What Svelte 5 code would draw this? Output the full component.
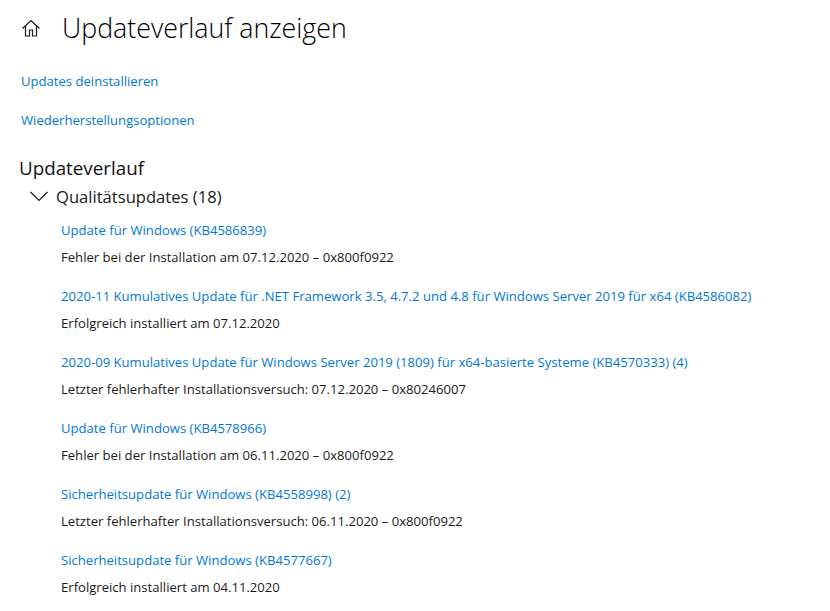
<script lang="ts">
	const updates = [
		{ title: 'Update für Windows (KB4586839)', status: 'Fehler bei der Installation am 07.12.2020 – 0x800f0922' },
		{ title: '2020-11 Kumulatives Update für .NET Framework 3.5, 4.7.2 und 4.8 für Windows Server 2019 für x64 (KB4586082)', status: 'Erfolgreich installiert am 07.12.2020' },
		{ title: '2020-09 Kumulatives Update für Windows Server 2019 (1809) für x64-basierte Systeme (KB4570333) (4)', status: 'Letzter fehlerhafter Installationsversuch: 07.12.2020 – 0x80246007' },
		{ title: 'Update für Windows (KB4578966)', status: 'Fehler bei der Installation am 06.11.2020 – 0x800f0922' },
		{ title: 'Sicherheitsupdate für Windows (KB4558998) (2)', status: 'Letzter fehlerhafter Installationsversuch: 06.11.2020 – 0x800f0922' },
		{ title: 'Sicherheitsupdate für Windows (KB4577667)', status: 'Erfolgreich installiert am 04.11.2020' }
	];
</script>

<div class="page">
	<header class="head">
		<svg class="home" width="20" height="20" viewBox="0 0 20 20" fill="none" stroke="#1a1a1a" stroke-width="1.2">
			<path d="M1.5 10.500 10 2.500l8.500 8" />
			<path d="M4.500 8v10h4v-6h3v6h4V8" />
		</svg>
		<h1>Updateverlauf anzeigen</h1>
	</header>

	<a class="link top-link">Updates deinstallieren</a>
	<a class="link top-link">Wiederherstellungsoptionen</a>

	<h2>Updateverlauf</h2>
	<div class="group">
		<svg class="chevron" width="18" height="11" viewBox="0 0 18 11" fill="none" stroke="#1a1a1a" stroke-width="1.2">
			<path d="M.5 1 9 9.500 17.500 1" />
		</svg>
		<span>Qualitätsupdates (18)</span>
	</div>

	<ul class="list">
		{#each updates as u}
			<li>
				<a class="link">{u.title}</a>
				<p>{u.status}</p>
			</li>
		{/each}
	</ul>
</div>

<style>
	:global(body) {
		background: #fff;
		font-family: 'Open Sans', 'Noto Sans', sans-serif;
		overflow: hidden;
	}

	.page {
		height: 611px;
		overflow: hidden;
		color: #1a1a1a;
	}

	.head {
		display: flex;
		align-items: center;
		gap: 21px;
		padding: 9px 0 0 21px;
		height: 37px;
	}

	.home {
		flex-shrink: 0;
	}

	h1 {
		margin: 0;
		font-size: 26.750px;
		font-weight: 300;
		line-height: 37px;
		color: #000;
	}

	.link {
		display: block;
		color: #0078d7;
		font-size: 13.100px;
		line-height: 20px;
	}

	.top-link {
		margin-left: 21px;
		margin-bottom: 19px;
	}

	.top-link:first-of-type {
		margin-top: 25px;
	}

	h2 {
		margin: 25px 0 0 19px;
		font-size: 18.800px;
		font-weight: 400;
		line-height: 26px;
		color: #111;
	}

	.group {
		display: flex;
		align-items: center;
		gap: 8px;
		padding-left: 30px;
		height: 30px;
		font-size: 16.600px;
	}

	.list {
		list-style: none;
		margin: 9px 0 0 61px;
		padding: 0;
		display: flex;
		flex-direction: column;
		gap: 19px;
	}

	p {
		margin: 7px 0 0;
		font-size: 13.100px;
		line-height: 20px;
		color: #1a1a1a;
	}
</style>
